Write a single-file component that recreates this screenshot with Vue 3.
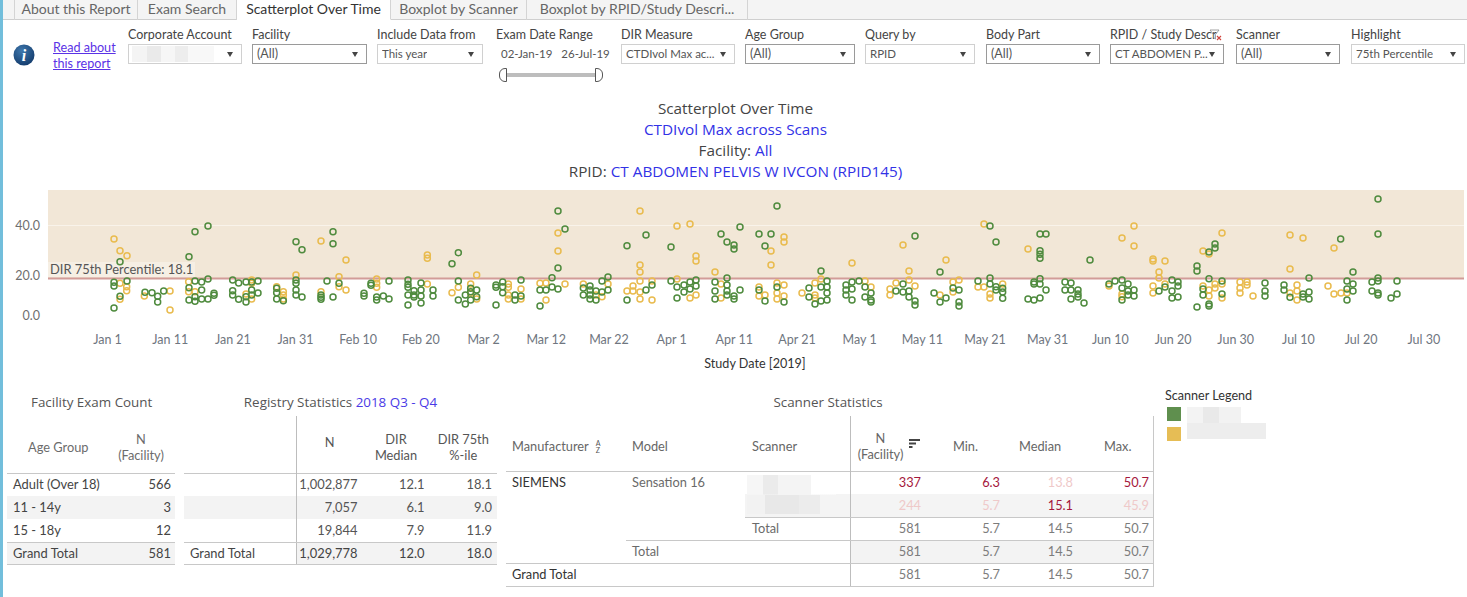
<script setup>
const tabs = [
  { label: 'About this Report', w: 124 },
  { label: 'Exam Search', w: 99 },
  { label: 'Scatterplot Over Time', w: 154, active: true },
  { label: 'Boxplot by Scanner', w: 136 },
  { label: 'Boxplot by RPID/Study Descri...', w: 221 },
]
const filters = [
  { label: 'Corporate Account', value: '', w: 114, gap: 10, blur: true },
  { label: 'Facility', value: '(All)', w: 115, gap: 10, strong: true, big: true },
  { label: 'Include Data from', value: 'This year', w: 106, gap: 13 },
  { date: true, label: 'Exam Date Range', w: 112, gap: 13 },
  { label: 'DIR Measure', value: 'CTDIvol Max ac...', w: 114, gap: 10 },
  { label: 'Age Group', value: '(All)', w: 110, gap: 10, strong: true, big: true },
  { label: 'Query by', value: 'RPID', w: 110, gap: 11 },
  { label: 'Body Part', value: '(All)', w: 114, gap: 10, strong: true, big: true },
  { label: 'RPID / Study Descr', value: 'CT ABDOMEN P...', w: 114, gap: 12, funnel: true, strong: true },
  { label: 'Scanner', value: '(All)', w: 104, gap: 11, strong: true, big: true },
  { label: 'Highlight', value: '75th Percentile', w: 114, gap: 0 },
]
const parse = (s, ox) => s.trim().split(/\s+/).map((p) => {
  const [a, b] = p.split(',').map(Number)
  return { x: ox + a / 3, y: 180 + b / 3 }
})
const yellow = [
  ...parse('342,177 360,212 381,227 360,310 380,320 380,332 360,358 433,348 510,333 510,390 566,305 566,335 585,335 755,300 755,310 738,342 755,357 830,320 850,335 850,345 850,357 888,285 963,183 963,335 1038,240 1017,290 1017,320 1038,330 1130,297 1130,310 1130,322 1282,225 1282,235 1282,312 1356,338 1375,322 1412,312 1430,285 1412,340 1430,357', 0),
  ...parse('25,312 25,322 25,345 25,357 63,327 63,357 120,310 138,309 138,360 174,159 174,213 195,312 250,312 288,345 306,350 324,312 381,333 399,318 399,333 420,93 420,255 420,276 420,303 420,336 420,357 456,303 456,360 531,138 570,132 588,228 588,243 531,297 570,354 588,345 645,276 663,312 663,354 813,213 813,255 852,171 852,186 777,321 777,348 795,345 831,309 831,339 831,357 852,315 852,348 906,339 945,309 945,345 945,354 963,297 1056,249 1095,303 1113,321 1170,327 1170,345 1188,309 1209,195 1227,273 1227,300 1245,318 1320,345 1338,240 1359,306 1359,336 1377,300 1452,132 1434,321 1452,321 1470,342 1470,354', 500),
  ...parse('84,207 366,174 402,138 402,198 459,237 459,243 495,243 477,276 477,294 459,318 459,339 495,312 609,213 666,159 627,222 609,318 627,330 627,348 645,312 645,324 666,312 666,354 720,306 720,324 720,339 741,306 741,315 759,348 870,165 909,174 870,267 891,315 891,333 870,339 891,360 984,318 1002,204 1002,342 1023,339 1041,339 366,342 366,350 327,318 8,312', 1000),
]
const green = [
  ...parse('360,245 342,307 342,318 381,303 360,349 342,384 435,337 456,338 473,349 473,366 491,333 585,155 624,138 567,230 567,323 585,303 605,306 624,297 605,330 585,350 567,360 585,364 605,357 624,357 642,340 642,346 698,300 716,309 738,306 755,306 774,303 698,332 698,345 716,358 738,366 755,330 755,345 738,350 774,339 830,325 830,338 830,357 850,362 888,185 906,209 888,300 888,310 888,330 888,345 906,351 999,155 999,191 981,303 1017,310 963,345 963,352 963,358 999,351 1113,310 1113,316 1092,340 1092,348 1130,351 1130,360 1150,348 1167,303 1167,357 1224,300 1224,313 1224,322 1224,345 1224,375 1242,332 1242,345 1242,351 1263,309 1263,330 1263,348 1263,369 1299,330 1299,348 1356,251 1375,218 1375,303 1375,360 1396,345 1396,372 1412,325 1412,335 1412,360 1430,330 1430,350 1488,315 1488,322 1488,375', 0),
  ...parse('8,306 8,320 8,338 45,345 45,360 63,300 63,348 120,330 120,378 138,330 156,293 156,321 174,327 174,93 195,147 174,264 250,324 250,345 270,318 270,330 270,345 270,357 288,333 288,360 306,303 306,336 324,291 324,330 381,197 381,360 438,165 438,330 456,315 513,201 513,303 531,321 531,354 552,315 552,336 570,306 570,327 588,300 588,318 663,162 681,186 702,195 702,207 720,141 645,306 645,333 645,357 681,294 681,315 681,333 681,345 702,348 702,357 720,330 777,162 813,162 795,198 831,78 777,330 795,363 831,321 852,366 963,273 927,324 927,351 945,372 963,321 963,363 981,303 981,321 981,339 981,360 1038,315 1038,330 1038,345 1056,306 1056,327 1056,360 1077,303 1095,321 1095,351 1113,339 1113,360 1113,366 1188,333 1209,312 1209,336 1227,333 1227,351 1245,168 1245,363 1245,375 1302,339 1320,276 1320,366 1338,354 1359,324 1377,330 1377,366 1377,378 1434,303 1470,138 1488,186 1470,294 1470,312 1488,320 1488,330', 500),
  ...parse('120,162 138,162 120,212 120,223 120,235 270,240 120,296 102,306 102,312 120,312 138,330 120,354 84,357 102,360 195,306 213,309 195,330 213,330 234,330 234,342 234,351 213,357 252,369 327,312 345,303 366,300 384,312 366,324 384,333 402,330 384,345 402,348 366,360 516,300 534,306 534,318 495,321 477,333 516,333 516,354 534,351 591,258 591,273 645,192 645,204 627,216 627,296 609,327 609,345 591,381 627,372 627,378 666,303 666,342 795,309 795,333 795,348 852,315 852,330 870,352 909,342 909,351 927,294 927,336 927,357 1022,177 1059,276 1041,303 1059,312 1041,327 1059,333 1041,360 1134,57 1134,162 1134,294 1134,303 1116,306 1116,333 1134,339 1134,345 1191,303 1191,342 1173,354 8,325 8,336 8,355', 1000),
]
const ticks = ['Jan 1', 'Jan 11', 'Jan 21', 'Jan 31', 'Feb 10', 'Feb 20', 'Mar 2', 'Mar 12', 'Mar 22', 'Apr 1', 'Apr 11', 'Apr 21', 'May 1', 'May 11', 'May 21', 'May 31', 'Jun 10', 'Jun 20', 'Jun 30', 'Jul 10', 'Jul 20', 'Jul 30']
  .map((t, i) => ({ t, x: 107.5 + i * 62.68 }))

const ageRows = [
  { a: 'Adult (Over 18)', n: '566' },
  { a: '11 - 14y', n: '3', alt: true },
  { a: '15 - 18y', n: '12' },
  { a: 'Grand Total', n: '581', alt: true, total: true },
]
const regRows = [
  { c: ['1,002,877', '12.1', '18.1'] },
  { c: ['7,057', '6.1', '9.0'], alt: true },
  { c: ['19,844', '7.9', '11.9'] },
  { h: 'Grand Total', c: ['1,029,778', '12.0', '18.0'], total: true },
]
</script>

<template>
  <div class="page">
    <nav class="tabs">
      <div v-for="t in tabs" :key="t.label" class="tab" :class="{ active: t.active }" :style="{ width: t.w + 'px' }">{{ t.label }}</div>
    </nav>

    <section class="filters">
      <svg class="info" width="22" height="22" viewBox="0 0 22 22">
        <defs>
          <radialGradient id="ig" cx="40%" cy="30%" r="75%">
            <stop offset="0" stop-color="#3f78ad" />
            <stop offset="1" stop-color="#123a6b" />
          </radialGradient>
        </defs>
        <circle cx="11" cy="11" r="10.5" fill="url(#ig)" />
        <text x="11" y="17" text-anchor="middle" class="info-i">i</text>
      </svg>
      <a class="about">Read about<br />this report</a>
      <div v-for="f in filters" :key="f.label" class="filter" :style="{ width: f.w + 'px', marginRight: f.gap + 'px' }">
        <div class="f-label">{{ f.label }}
          <svg v-if="f.funnel" class="funnel" width="13" height="12" viewBox="0 0 13 12">
            <path d="M1 1h9L6.5 5.5V10L4.500 8.500V5.500Z" fill="none" stroke="#8b8b8b" stroke-width=".8" />
            <path d="M8 7l4 4M12 7l-4 4" stroke="#d0433c" stroke-width="1.100" />
          </svg>
        </div>
        <template v-if="f.date">
          <div class="dates"><span>02-Jan-19</span><span>26-Jul-19</span></div>
          <div class="slider">
            <span class="knob left"></span><span class="track"></span><span class="knob right"></span>
          </div>
        </template>
        <div v-else class="select" :class="{ strong: f.strong, big: f.big }">
          <span v-if="f.blur" class="blur-f"></span>
          <span v-else class="s-val">{{ f.value }}</span>
          <span class="caret"></span>
        </div>
      </div>
    </section>

    <header class="title">
      <div>Scatterplot Over Time</div>
      <div class="blue">CTDIvol Max across Scans</div>
      <div>Facility: <span class="blue">All</span></div>
      <div>RPID: <span class="blue">CT ABDOMEN PELVIS W IVCON (RPID145)</span></div>
    </header>

    <svg class="chart" width="1464" height="162" viewBox="3 190 1464 162">
      <rect x="48" y="190" width="1416" height="88" fill="#f2e7d7" />
      <line x1="48" x2="1464" y1="225.500" y2="225.500" stroke="#f9f3ea" />
      <line x1="48" x2="1464" y1="278.500" y2="278.500" stroke="#d29c98" stroke-width="2" />
      <rect x="48" y="262" width="147" height="15" fill="#f6efe4" />
      <text x="50" y="274" class="ref">DIR 75th Percentile: 18.1</text>
      <text x="40" y="230" class="ylab">40.0</text>
      <text x="40" y="280" class="ylab">20.0</text>
      <text x="40" y="320" class="ylab">0.0</text>
      <circle v-for="(p, i) in yellow" :key="'y' + i" :cx="p.x" :cy="p.y" r="3" class="dot-y" />
      <circle v-for="(p, i) in green" :key="'g' + i" :cx="p.x" :cy="p.y" r="3" class="dot-g" />
      <text v-for="k in ticks" :key="k.t" :x="k.x" y="344" class="xlab">{{ k.t }}</text>
    </svg>
    <div class="xtitle">Study Date [2019]</div>

    <section class="bottom">
      <div class="block b1">
        <h3 class="b-title">Facility Exam Count</h3>
        <div class="t1-head">
          <span>Age Group</span>
          <span class="center">N<br />(Facility)</span>
        </div>
        <div v-for="r in ageRows" :key="r.a" class="t1-row" :class="{ alt: r.alt, total: r.total }">
          <span>{{ r.a }}</span><span class="num">{{ r.n }}</span>
        </div>
      </div>

      <div class="block b2">
        <h3 class="b-title">Registry Statistics <span class="blue2">2018 Q3 - Q4</span></h3>
        <div class="t2-head">
          <span></span>
          <span class="center n1">N</span>
          <span class="center">DIR<br />Median</span>
          <span class="center">DIR 75th<br />%-ile</span>
        </div>
        <div v-for="(r, i) in regRows" :key="i" class="t2-row" :class="{ alt: r.alt, total: r.total }">
          <span class="h">{{ r.h }}</span>
          <span v-for="c in r.c" :key="c" class="num">{{ c }}</span>
        </div>
      </div>

      <div class="block b3">
        <h3 class="b-title">Scanner Statistics</h3>
        <div class="t3-head">
          <span class="pad">Manufacturer <i class="az">A<br />Z</i></span>
          <span>Model</span>
          <span>Scanner</span>
          <span class="n-head">N<br />(Facility)
            <svg class="sort" width="12" height="10" viewBox="0 0 12 10"><path d="M0 1h11M0 4.500h7M0 8h3.500" stroke="#444" stroke-width="1.800" /></svg>
          </span>
          <span class="mh">Min.</span>
          <span class="mh">Median</span>
          <span class="mh">Max.</span>
        </div>
        <div class="t3-row r1">
          <b class="pad">SIEMENS</b><span>Sensation 16</span><span></span>
          <em class="red">337</em><em class="red">6.3</em><em class="red-l">13.8</em><em class="red">50.7</em>
        </div>
        <div class="t3-row r2">
          <span></span><span></span><span></span>
          <em class="red-l">244</em><em class="red-l">5.7</em><em class="red">15.1</em><em class="red-l">45.9</em>
        </div>
        <span class="blur-s" aria-hidden="true"></span>
        <div class="t3-row r3">
          <span></span><span></span><span>Total</span>
          <em>581</em><em>5.7</em><em>14.5</em><em>50.7</em>
        </div>
        <div class="t3-row r4">
          <span></span><span>Total</span><span></span>
          <em>581</em><em>5.7</em><em>14.5</em><em>50.7</em>
        </div>
        <div class="t3-row r5">
          <b class="pad">Grand Total</b><span></span><span></span>
          <em>581</em><em>5.7</em><em>14.5</em><em>50.7</em>
        </div>
      </div>

      <aside class="legend">
        <div class="l-title">Scanner Legend</div>
        <div class="l-row"><span class="sw g"></span><span class="l-blur a"></span></div>
        <div class="l-row"><span class="sw y"></span><span class="l-blur b"></span></div>
      </aside>
    </section>
  </div>
</template>

<style>
html, body { margin: 0; background: #fff; }
</style>

<style scoped>
.page {
  width: 1467px; height: 597px; overflow: hidden; box-sizing: border-box;
  border-left: 3px solid #72bedb; background: #fff; color: #444;
  font-family: "Lato", "Open Sans", sans-serif; font-size: 13px;
  position: relative;
}
.blue { color: #3232e6; }
.blue2 { color: #4a3ae6; }
.tabs {
  display: flex; height: 20px; box-sizing: border-box; background: #f4f4f4;
  border-bottom: 1px solid #cfcfcf; padding-left: 11px;
}
.tab {
  box-sizing: border-box; height: 20px; line-height: 18px; text-align: center;
  border-right: 1px solid #d4d4d4; color: #666; font-size: 14px; white-space: nowrap;
}
.tab:first-child { border-left: 1px solid #d4d4d4; }
.tab.active { background: #fff; color: #333; border-bottom: 1px solid #fff; }

.filters { display: flex; height: 65px; padding-top: 6px; box-sizing: border-box; align-items: flex-start; }
.info { margin: 18px 0 0 10px; flex: none; }
.info-i { font: italic bold 16px "Liberation Serif", serif; fill: #fff; }
.about { width: 75px; margin: 14px 0 0 18px; flex: none; color: #5a32e6; text-decoration: underline; font-size: 12.600px; line-height: 16px; white-space: nowrap; }
.filter { flex: none; }
.f-label { height: 18px; line-height: 17px; font-size: 12.500px; color: #444; white-space: nowrap; position: relative; }
.funnel { position: absolute; right: 2px; top: 3px; }
.select {
  box-sizing: border-box; height: 20px; border: 1px solid #d0d0d0; background: #fff;
  display: flex; align-items: center; justify-content: space-between; padding: 0 8px 0 4px;
  font-size: 11.500px; line-height: 16px; color: #555; white-space: nowrap;
}
.select.strong { border-color: #9a9a9a; }
.select.big .s-val { font-size: 12.500px; }
.s-val { overflow: hidden; }
.blur-f { width: 82px; height: 16px; margin-left: -1px; background: linear-gradient(90deg, #f4f4f4 0 18%, #eaeaea 18% 35%, #f6f6f6 35% 52%, #ededed 52% 68%, #f8f8f8 68% 100%); }
.caret { width: 0; height: 0; border-left: 3.500px solid transparent; border-right: 3.500px solid transparent; border-top: 5px solid #444; flex: none; }
.dates { display: flex; justify-content: flex-start; gap: 9px; padding: 3px 0 0 5px; height: 17px; font-size: 11.500px; color: #555; white-space: nowrap; }
.slider { display: flex; align-items: center; margin: 4px 0 0 3px; width: 104px; }
.track { flex: 1; height: 4px; background: #bdbdbd; }
.knob { width: 6px; height: 12px; border: 1px solid #555; background: #fff; }
.knob.left { border-radius: 6px 0 0 6px; }
.knob.right { border-radius: 0 6px 6px 0; }

.title { height: 105px; padding-top: 13px; box-sizing: border-box; text-align: center; font-family: "Open Sans", sans-serif; font-size: 15.300px; line-height: 21px; color: #444; width: 1465px; }
.chart { display: block; }
.ref { font-size: 12.900px; fill: #555; }
.ylab { font-size: 12.500px; fill: #6f6f6f; text-anchor: end; }
.xlab { font-size: 12.500px; fill: #6f7680; text-anchor: middle; }
.dot-y { fill: none; stroke: #e9bb4e; stroke-width: 1.500; }
.dot-g { fill: none; stroke: #4f8b3e; stroke-width: 1.500; }
.xtitle { height: 24px; line-height: 24px; text-align: center; width: 1504px; font-size: 12.600px; color: #333; }

.bottom { display: flex; margin-top: 17px; align-items: flex-start; }
.block { flex: none; position: relative; }
.b-title { margin: 0; height: 28px; font-family: "Open Sans", sans-serif; font-size: 13.400px; font-weight: 400; line-height: 19px; color: #555; text-align: center; white-space: nowrap; }
.center { text-align: center; }
.num { text-align: right; }

.b1 { width: 168px; margin-left: 4px; margin-right: 9px; }
.b1 .b-title { text-align: left; padding-left: 24px; box-sizing: border-box; }
.t1-head { display: grid; grid-template-columns: 100px 68px; height: 58px; margin: -5px 0 -1px; padding-top: 5px; box-sizing: border-box; align-items: center; font-size: 12.800px; color: #6c6c6c; line-height: 16px; border-bottom: 1px solid #c8c8c8; }
.t1-head span:first-child { padding-left: 21px; }
.t1-row { display: grid; grid-template-columns: 1fr auto; height: 23px; line-height: 22px; padding: 0 4px 0 6px; box-sizing: border-box; font-size: 12.900px; color: #444; }
.t1-row.alt { background: #f3f3f3; }
.t1-row.total { border-top: 1px solid #c8c8c8; border-bottom: 1px solid #c8c8c8; line-height: 20px; }

.b2 { width: 313px; margin-right: 9px; }
.t2-head { display: grid; grid-template-columns: 112px 66.500px 67px 67.500px; height: 58px; margin: -5px 0 -1px; padding-top: 5px; box-sizing: border-box; align-items: center; font-size: 12.800px; color: #555; line-height: 16px; border-bottom: 1px solid #c8c8c8; }
.n1 { border-left: 1px solid #bdbdbd; margin-top: -5px; height: calc(100% + 5px); line-height: 52px; }
.t2-row { display: grid; grid-template-columns: 112px 66.500px 67px 67.500px; height: 23px; line-height: 22px; box-sizing: border-box; font-size: 12.900px; color: #555; }
.t2-row .h { padding-left: 6px; color: #444; }
.t2-row .num { padding-right: 5px; }
.t2-row .num:nth-child(2) { border-left: 1px solid #bdbdbd; }
.t2-row.alt { background: #f3f3f3; }
.t2-row.total { border-top: 1px solid #c8c8c8; border-bottom: 1px solid #c8c8c8; line-height: 20px; }
.t2-row.total .num { background: #f3f3f3; color: #444; }

.b3 { width: 649px; margin-right: 10px; }
.b3 .b-title { width: 644px; }
.t3-head, .t3-row { display: grid; grid-template-columns: 126px 120px 98px 71px 79px 73px 81px; box-sizing: border-box; width: 648px; border-right: 1px solid #c8c8c8; }
.t3-head { height: 56px; margin: -5px 0 -1px; padding-top: 5px; align-items: center; color: #666; font-size: 12.800px; line-height: 16px; border-bottom: 1px solid #c8c8c8; }
.pad { padding-left: 6px; }
.n-head { border-left: 1px solid #bdbdbd; height: calc(100% + 5px); margin-top: -5px; padding: 14px 11px 0 0; box-sizing: border-box; position: relative; text-align: center; }
.sort { position: absolute; right: 0; top: 23px; }
.az { display: inline-block; vertical-align: middle; font-style: normal; font-size: 7px; line-height: 7px; color: #555; margin-left: 4px; }
.t3-head .mh:nth-child(5) { padding-left: 32px; }
.t3-head .mh:nth-child(6) { padding-left: 19px; }
.t3-head .mh:nth-child(7) { padding-left: 31px; }
.t3-row { height: 23px; line-height: 22px; font-size: 12.800px; color: #6a6a6a; white-space: nowrap; position: relative; }
.t3-row b { font-weight: 400; color: #333; font-size: 12.800px; }
.t3-row em { font-style: normal; text-align: right; color: #7c7c7c; }
.t3-row em:nth-child(4) { border-left: 1px solid #bdbdbd; }
.t3-row em:nth-child(7) { padding-right: 5px; }
.t3-row em.red { color: #a5173c; }
.t3-row em.red-l { color: #efc9c9; }
.t3-row.r2 { height: 24px; background: linear-gradient(90deg, #fff 0 239px, #f4f4f4 239px); }
.t3-row.r2::after { content: ""; position: absolute; left: 239px; right: 0; bottom: 0; height: 1px; background: #c8c8c8; }
.t3-row.r3, .t3-row.r4, .t3-row.r5 { line-height: 21px; }
.t3-row.r4 { background: linear-gradient(90deg, #fff 0 344px, #f3f3f3 344px); border-bottom: 1px solid #c8c8c8; }
.t3-row.r3::after { content: ""; position: absolute; left: 120px; right: 0; bottom: 0; height: 1px; background: #c8c8c8; }
.t3-row.r5 { border-bottom: 1px solid #c8c8c8; }
.blur-s {
  position: absolute; left: 241px; top: 82px; width: 89px; height: 39px;
  background:
    linear-gradient(90deg, #f6f6f6 0 18%, #ebebeb 18% 35%, #f4f4f4 35% 72%, #fff 72%) top / 100% 50% no-repeat,
    linear-gradient(90deg, #f2f2f2 0 20%, #e8e8e8 20% 58%, #ececec 58% 82%, #f4f4f4 82%) bottom / 100% 50% no-repeat;
}

.legend { width: 110px; margin-top: -6px; }
.l-title { height: 18px; line-height: 18px; font-size: 12.600px; color: #333; white-space: nowrap; }
.l-row { display: flex; height: 20px; margin-left: 2px; }
.sw { width: 14px; height: 14px; margin-top: 2px; flex: none; }
.sw.g { background: #5f8f4e; }
.sw.y { background: #e6bd55; }
.l-blur { height: 16px; margin-left: 6px; flex: none; }
.l-blur.a { width: 54px; margin-top: 2px; background: linear-gradient(90deg, #f3f3f3 0 30%, #e9e9e9 30% 60%, #f2f2f2 60%); }
.l-blur.b { width: 79px; margin-top: -2px; background: #ededed; }
</style>
